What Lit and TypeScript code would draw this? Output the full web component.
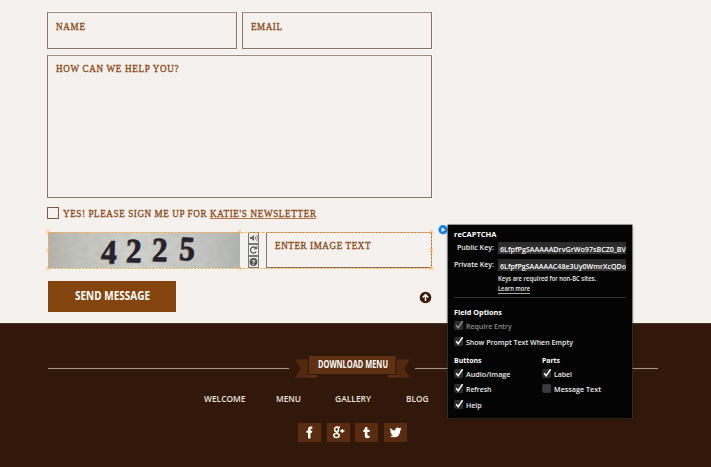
import { LitElement, html, svg, css } from "lit";
import { customElement } from "lit/decorators.js";

/** A line of text set to an exact measure; baseline sits at the given y. */
const line = (text: string, cls: string, width: number, height: number, baseline: number) => html`
  <svg class="line ${cls}" width=${width} height=${height}>
    <text x="0" y=${baseline} textLength=${width} lengthAdjust="spacingAndGlyphs">${text}</text>
  </svg>`;

/** Narrow, tracked capitals used for the form labels. */
const NARROW = 0.93;
const caps = (text: string, width: number, height: number, baseline: number) => html`
  <svg class="line serif" width=${width} height=${height}>
    <text transform="scale(${NARROW} 1)" x="0" y=${baseline} textLength=${width / NARROW} lengthAdjust="spacing">${text}</text>
  </svg>`;

@customElement("contact-form")
export class ContactForm extends LitElement {
  static styles = css`
    :host { display: block; width: 385px; padding: 12px 0 0 47px; }
    .line { display: block; overflow: visible; }
    .serif { font: 9.8px "Liberation Serif", serif; fill: #8a4712; stroke: #8a4712; stroke-width: .3px; }
    .cond { font: bold 11.5px "Open Sans", sans-serif; fill: #fff; }
    .pair { display: grid; grid-template-columns: 190px 190px; gap: 5px; }
    .field { box-sizing: border-box; border: 1px solid #8c7262; border-top-color: #a08b7e; box-shadow: 0 0 0 1px #fbf8f6; padding-left: 8px; height: 37px; }
    .area { height: 143.5px; margin-top: 5.5px; }
    .signup { display: flex; align-items: flex-start; margin-top: 9px; height: 12px; }
    .box { box-sizing: border-box; width: 12px; height: 12px; border: 1px solid #80583e; margin-right: 4px; }
    .link { border-bottom: 1px solid #b5764a; height: 11px; margin-left: 3px; }
    .captcha { position: relative; display: flex; margin: 13px 0 0 1px; height: 37px; width: 384px; }
    .picture { display: block; overflow: visible; }
    .tools { display: grid; grid-template-rows: repeat(3, 12px); margin-left: 8px; width: 11px; }
    .tools svg { display: block; }
    .captcha .field { width: 166px; margin-left: 7px; height: 36px; box-shadow: none; }
    .marks { position: absolute; left: -2px; top: -2px; overflow: visible; }
    .actions { display: flex; justify-content: space-between; margin: 12px 0 0 1px; }
    .send { width: 128px; height: 31px; background: #85450f; display: flex; justify-content: center; }
    .up { margin: 10px 0 0; }
  `;
  render() {
    const cross = (x: number, y: number) => svg`<path d="M${x - 1.8} ${y - 1.8}l3.6 3.6m0-3.6l-3.6 3.6" stroke="#f8b454" stroke-width=".9"/>`;
    return html`
      <div class="pair">
        <div class="field">${caps("NAME", 29, 20, 17)}</div>
        <div class="field">${caps("EMAIL", 31, 20, 17)}</div>
      </div>
      <div class="field area">${caps("HOW CAN WE HELP YOU?", 122.5, 20, 16)}</div>
      <div class="signup">
        <span class="box"></span>
        ${caps("YES! PLEASE SIGN ME UP FOR", 143.5, 12, 9.6)}
        <div class="link">${caps("KATIE'S NEWSLETTER", 106, 11, 9.6)}</div>
      </div>
      <div class="captcha">
        <svg class="picture" width="192" height="36">
          <defs>
            <linearGradient id="p"><stop offset="0" stop-color="#b3b2ab"/><stop offset=".15" stop-color="#c3c3bd"/><stop offset=".45" stop-color="#d2d2ce"/><stop offset=".8" stop-color="#c6c7c4"/><stop offset="1" stop-color="#b2b4b3"/></linearGradient>
            <filter id="g" x="0" y="0" width="1" height="1"><feTurbulence type="fractalNoise" baseFrequency=".12 .2" numOctaves="3" seed="4"/><feColorMatrix values="0 0 0 0 .35  0 0 0 0 .35  0 0 0 0 .32  .8 0 0 0 -.22"/></filter>
          </defs>
          <rect width="192" height="36" fill="url(#p)"/>
          <rect width="192" height="36" filter="url(#g)" opacity=".45"/>
          <g font-family="Liberation Serif, serif" font-weight="700" font-size="34">
            ${[["4", 53, 31, 2], ["2", 78, 30, 1], ["2", 104, 29, 1], ["5", 131, 27.5, 3]].map(([d, x, y, r]) => svg`
              <g transform="translate(${x} ${y}) rotate(${r}) scale(.92 1)">
                <text x="-1" y="1" fill="#77715f">${d}</text><text fill="#26202f" stroke="#26202f" stroke-width=".5">${d}</text>
              </g>`)}
          </g>
        </svg>
        <div class="tools">
          <svg width="11" height="12" fill="none" stroke="#777"><rect x=".5" y=".5" width="10" height="11" fill="#eeecea"/><path d="M2 5h1.500L6 3v6L3.500 7H2z" fill="#666" stroke="none"/><path d="M7 4.200q1.200 1.800 0 3.600M8.500 3q2 3 0 6" stroke-width=".8"/></svg>
          <svg width="11" height="12" fill="none" stroke="#777"><rect x=".5" y=".5" width="10" height="11" fill="#f4f2f0"/><path d="M8 4A3.100 3.100 0 1 0 8.300 7.500" stroke="#444" stroke-width="1.100"/><path d="M8.800 2.200v2.700H6" stroke="#444"/></svg>
          <svg width="11" height="12"><rect x=".5" y=".5" width="10" height="11" fill="#eeecea" stroke="#777"/><circle cx="5.500" cy="6" r="3.900" fill="#555"/><text x="5.500" y="8.500" text-anchor="middle" font-family="Open Sans" font-weight="700" font-size="7" fill="#eee">?</text></svg>
        </div>
        <div class="field">${caps("ENTER IMAGE TEXT", 95.5, 20, 16.2)}</div>
        <svg class="marks" width="388" height="41">
          <rect x="2.500" y="2.500" width="383" height="36" fill="none" stroke="#fbb04c" stroke-dasharray="2 1.500"/>
          ${[[2, 2], [193.500, 2], [385.500, 2], [2, 20.500], [385.500, 20.500], [2, 38.500], [193.500, 38.500], [385.500, 38.500]].map(([x, y]) => cross(x, y))}
        </svg>
      </div>
      <div class="actions">
        <div class="send">${line("SEND MESSAGE", "cond", 75, 31, 18.7)}</div>
        <svg class="up" width="13" height="13"><circle cx="6.500" cy="6.500" r="5.800" fill="#3b1804"/><path d="M6.500 10V4M3.600 6.500L6.500 3.600L9.400 6.500" fill="none" stroke="#f5f1ee" stroke-width="1.600"/></svg>
      </div>`;
  }
}

@customElement("site-footer")
export class SiteFooter extends LitElement {
  static styles = css`
    :host { display: block; height: 144px; background: #32180b; overflow: hidden; }
    .line { display: block; overflow: visible; }
    .divider { display: flex; align-items: center; margin: 32px 53px 0 48px; height: 26px; }
    .rule { height: 1px; width: 241px; background: #a3958c; box-shadow: 0 0 1px #a3958c88; }
    .rule:last-child { width: 243px; }
    .ribbon { display: block; margin: 0 5px 0 6px; overflow: visible; }
    .ribbon text { font: bold 10px "Open Sans", sans-serif; fill: #fff; }
    .nav { font: 600 8.6px "Open Sans", sans-serif; fill: #e9e2dd; }
    nav { display: flex; margin: 10px 0 0 204px; height: 20px; }
    nav .line { margin-right: 30.5px; }
    nav .line:nth-child(2) { margin-right: 34px; }
    nav .line:nth-child(3) { margin-right: 34.5px; }
    .social { display: flex; gap: 5.600px; margin: 11.500px 0 0 298px; }
    .social svg { display: block; background: #5a2c0f; }
  `;
  render() {
    return html`
      <div class="divider">
        <span class="rule"></span>
        <svg class="ribbon" width="115" height="26">
          <path d="M0 4.500H21V22.500H0L6 13.500zM115 4.500H94V22.500H115L109 13.500z" fill="#55290e"/>
          <path d="M13 20h9v2.500h-9zM102 20h-9v2.500h9z" fill="#5d2f13"/>
          <rect x="12.800" y="0" width="89" height="20" fill="#32180b"/>
          <rect x="14" y="1" width="86.500" height="18" fill="#5f3012"/>
          <text x="23" y="12.500" textLength="70" lengthAdjust="spacingAndGlyphs">DOWNLOAD MENU</text>
        </svg>
        <span class="rule"></span>
      </div>
      <nav>
        ${line("WELCOME", "nav", 41.500, 20, 10.500)}${line("MENU", "nav", 25, 20, 10.500)}${line("GALLERY", "nav", 36, 20, 10.500)}${line("BLOG", "nav", 22.500, 20, 10.500)}
      </nav>
      <div class="social">
        <svg width="23" height="19" fill="#fff"><path d="M10 15.500V9.800H8.300V7.700H10V6.500Q10 3.600 12.600 3.600H14.300V5.800H13.300Q12.500 5.800 12.500 6.700V7.700H14.300L14 9.800H12.500V15.500z"/></svg>
        <svg width="23" height="19" fill="none" stroke="#fff" stroke-width="1.500"><ellipse cx="9.600" cy="6.500" rx="2" ry="2.200"/><path d="M9 4.200H13M11 8.300Q8.500 9 11 10.300"/><ellipse cx="9.500" cy="12.500" rx="2.700" ry="2"/><path d="M13.200 8H17.400M15.300 6V10" stroke-width="1.300"/></svg>
        <svg width="23" height="19" fill="#fff"><path d="M10.300 4H12.400V6.800H14.600V8.900H12.400V12Q12.500 13.200 14.600 12.700V14.700Q9.800 16.200 9.800 12.500V8.900H8.300V7.200Q10.100 6.500 10.300 4z"/></svg>
        <svg width="23" height="19" fill="#fff"><path d="M6.300 5Q8.500 7.500 11.300 7.500Q11 4.600 13.800 4.500Q14.800 4.500 15.500 5.200L17.300 4.600L16.500 6L17.500 5.900L16.300 7.200Q16.200 14.300 9.500 14.300Q7.500 14.300 6 13.300Q7.900 13.200 9 12.300Q7.300 12 6.900 10.700H7.900Q6.200 9.800 6.100 8.200L7 8.400Q5.600 7 6.300 5z"/></svg>
      </div>`;
  }
}

@customElement("options-panel")
export class OptionsPanel extends LitElement {
  static styles = css`
    :host { box-sizing: border-box; display: block; width: 184px; height: 192.500px; padding-left: 6px; background: #040404; box-shadow: 0 1px 3px #0008, 0 0 0 .5px #555; }
    .line { display: block; overflow: visible; }
    .text { font: 600 7px "Open Sans", sans-serif; fill: #eee; }
    .head { font: bold 7px "Open Sans", sans-serif; fill: #fff; }
    .dim { font: 600 7px "Open Sans", sans-serif; fill: #8c8c8c; }
    .small { font: 600 6.200px "Open Sans", sans-serif; fill: #f0f0f0; }
    .key { font: 600 7px "Open Sans", sans-serif; fill: #fff; }
    .title { height: 16.500px; }
    .row { display: grid; grid-template-columns: 40px 128px; column-gap: 3.500px; height: 17px; justify-items: end; }
    .value { width: 126px; height: 12.500px; padding-left: 2px; background: linear-gradient(#292929, #383838); overflow: hidden; }
    .notes { margin-left: 43.500px; }
    .link { width: 32px; height: 8.500px; border-bottom: 1px solid #aaa; }
    .sep { height: 1px; width: 172px; background: #333; margin-top: 3px; }
    .check { display: flex; gap: 3.500px; }
    .check svg:first-child { display: block; flex: none; }
    .columns { display: grid; grid-template-columns: 88px 1fr; }
  `;
  private check(text: string, width: number, height: number, on = true, dim = false) {
    return html`<div class="check">
      <svg width="8" height=${height} overflow="visible"><rect x=".7" y="1.500" width="8" height="8" rx=".8" fill=${on ? "#2c2c2c" : "#3b3b3b"} stroke="#484848" stroke-width=".5"/>${on ? svg`<path d="M2.200 5.200L4.200 7.800L8.600 1.200" fill="none" stroke=${dim ? "#909090" : "#fff"} stroke-width="1.500"/>` : ""}</svg>
      ${line(text, dim ? "dim" : "text", width, height, 8.500)}
    </div>`;
  }
  render() {
    return html`
      <div class="title">${line("reCAPTCHA", "head", 42.500, 16, 12.300)}</div>
      <div class="row">${line("Public Key:", "text", 37, 12, 8)}<div class="value">${line("6LfpfPgSAAAAADrvGrWo97sBCZ0_BV", "key", 126, 12, 9.800)}</div></div>
      <div class="row">${line("Private Key:", "text", 40, 12, 8.300)}<div class="value">${line("6LfpfPgSAAAAAC48e3Uy0WmrXcQDo", "key", 126, 12, 9.800)}</div></div>
      <div class="notes">${line("Keys are required for non-BC sites.", "small", 98, 8.500, 5)}
        <div class="link">${line("Learn more", "small", 32, 8, 6.800)}</div></div>
      <div class="sep"></div>
      ${line("Field Options", "head", 48, 22.500, 17)}
      ${this.check("Require Entry", 45.800, 15.500, true, true)}
      ${this.check("Show Prompt Text When Empty", 107, 15, true)}
      <div class="columns">
        <div>${line("Buttons", "head", 27.500, 17, 11.500)}${this.check("Audio/Image", 44.500, 15.800)}${this.check("Refresh", 25.500, 15.800)}${this.check("Help", 15.500, 14)}</div>
        <div>${line("Parts", "head", 18, 17, 11.500)}${this.check("Label", 18, 15.800)}${this.check("Message Text", 47, 14, false)}</div>
      </div>`;
  }
}

@customElement("app-root")
export class AppRoot extends LitElement {
  static styles = css`
    :host { position: relative; display: grid; grid-template-rows: 323px 144px; width: 711px; height: 467px; background: #f5f1ee; overflow: hidden; }
    site-footer { box-shadow: inset 0 1px #4a3428; }
    .popover { position: absolute; left: 448px; top: 225px; }
    .handle { position: absolute; left: 438px; top: 225px; }
  `;
  render() {
    return html`
      <contact-form></contact-form>
      <site-footer></site-footer>
      <svg class="handle" width="10" height="10"><circle cx="5" cy="4.700" r="4.600" fill="#1383ee"/><path d="M3.700 2.500L7.300 4.700L3.700 6.900z" fill="#fff"/></svg>
      <options-panel class="popover"></options-panel>`;
  }
}
